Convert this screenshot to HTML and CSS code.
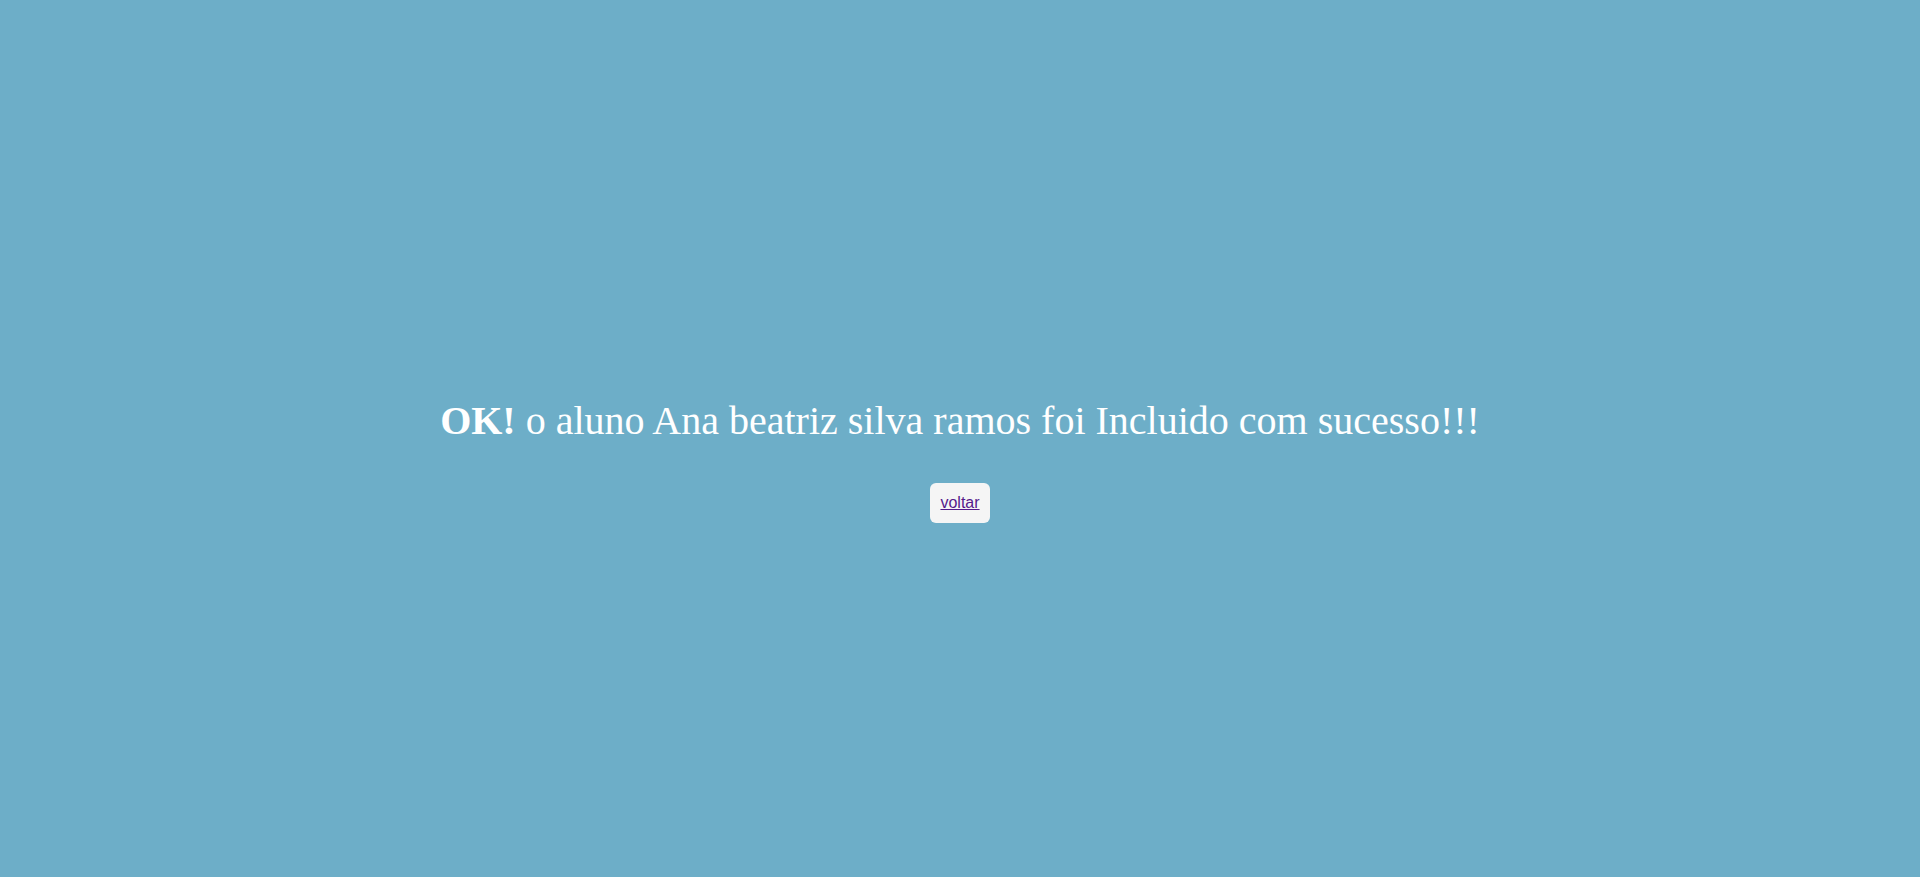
FILE: index.html
```html
<!DOCTYPE html>
<html lang="pt">
<head>
<meta charset="utf-8">
<title>Sucesso</title>
<link rel="stylesheet" href="styles.css">
</head>
<body>
<main class="page">
  <p class="message"><strong>OK!</strong> o aluno Ana beatriz silva ramos foi Incluido com sucesso!!!</p>
  <div class="back"><a href="#" class="back-link">voltar</a></div>
</main>
</body>
</html>
```
FILE: styles.css
```css
html, body {
  margin: 0;
  padding: 0;
  height: 100%;
}
body {
  background: #6daec8;
  font-family: "Liberation Serif", "Times New Roman", serif;
}
.page {
  box-sizing: border-box;
  height: 100%;
  padding-top: 43px;
  display: flex;
  flex-direction: column;
  align-items: center;
  justify-content: center;
}
.message {
  margin: 0;
  color: #ffffff;
  font-size: 40px;
  line-height: 46px;
}
.back {
  margin-top: 39px;
  background: #f5f5f5;
  border-radius: 6px;
  width: 60px;
  height: 40px;
  display: flex;
  align-items: center;
  justify-content: center;
}
.back-link {
  font-family: "Liberation Sans", Arial, sans-serif;
  font-size: 16px;
  color: #551a8b;
}
```
